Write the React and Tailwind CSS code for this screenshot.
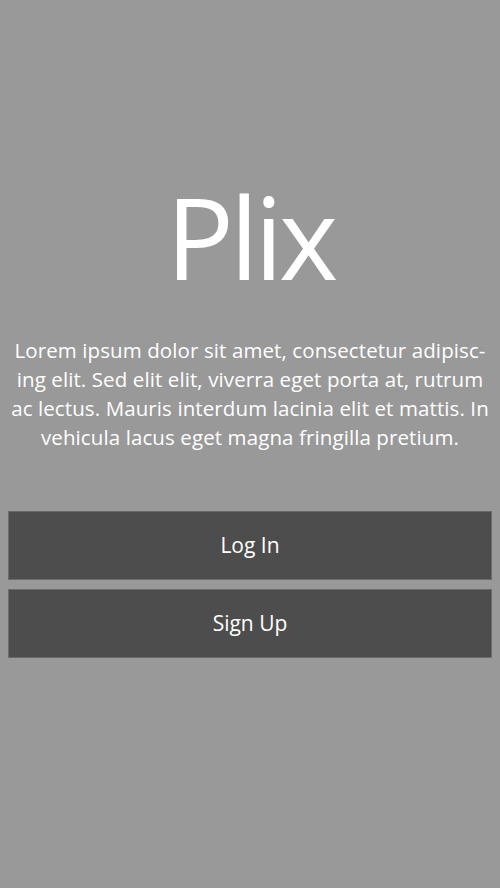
import React from "react";

const lines = [
	"Lorem ipsum dolor sit amet, consectetur adipisc-",
	"ing elit. Sed elit elit, viverra eget porta at, rutrum",
	"ac lectus. Mauris interdum lacinia elit et mattis. In",
	"vehicula lacus eget magna fringilla pretium.",
];

export default function App() {
	return (
		<main
			className="w-[500px] h-[888px] bg-[#999999] flex flex-col items-center text-white"
			style={{ fontFamily: "'Open Sans', 'Noto Sans', sans-serif" }}
		>
			<h1 className="mt-[168px] text-[113px] leading-[136px] tracking-[-4px] font-normal">
				Plix
			</h1>
			<p className="mt-[32px] text-[20.5px] leading-[29px] text-center tracking-[0.1px]">
				{lines.map((l, i) => (
					<span key={i} className="block whitespace-nowrap">
						{l}
					</span>
				))}
			</p>
			<div className="mt-[59px] w-full px-[8px] flex flex-col gap-[9px]">
				<button className="h-[69px] w-full bg-[#4d4d4d] border border-[#6b6b6b] text-[21px]">
					Log In
				</button>
				<button className="h-[69px] w-full bg-[#4d4d4d] border border-[#6b6b6b] text-[21px]">
					Sign Up
				</button>
			</div>
		</main>
	);
}
